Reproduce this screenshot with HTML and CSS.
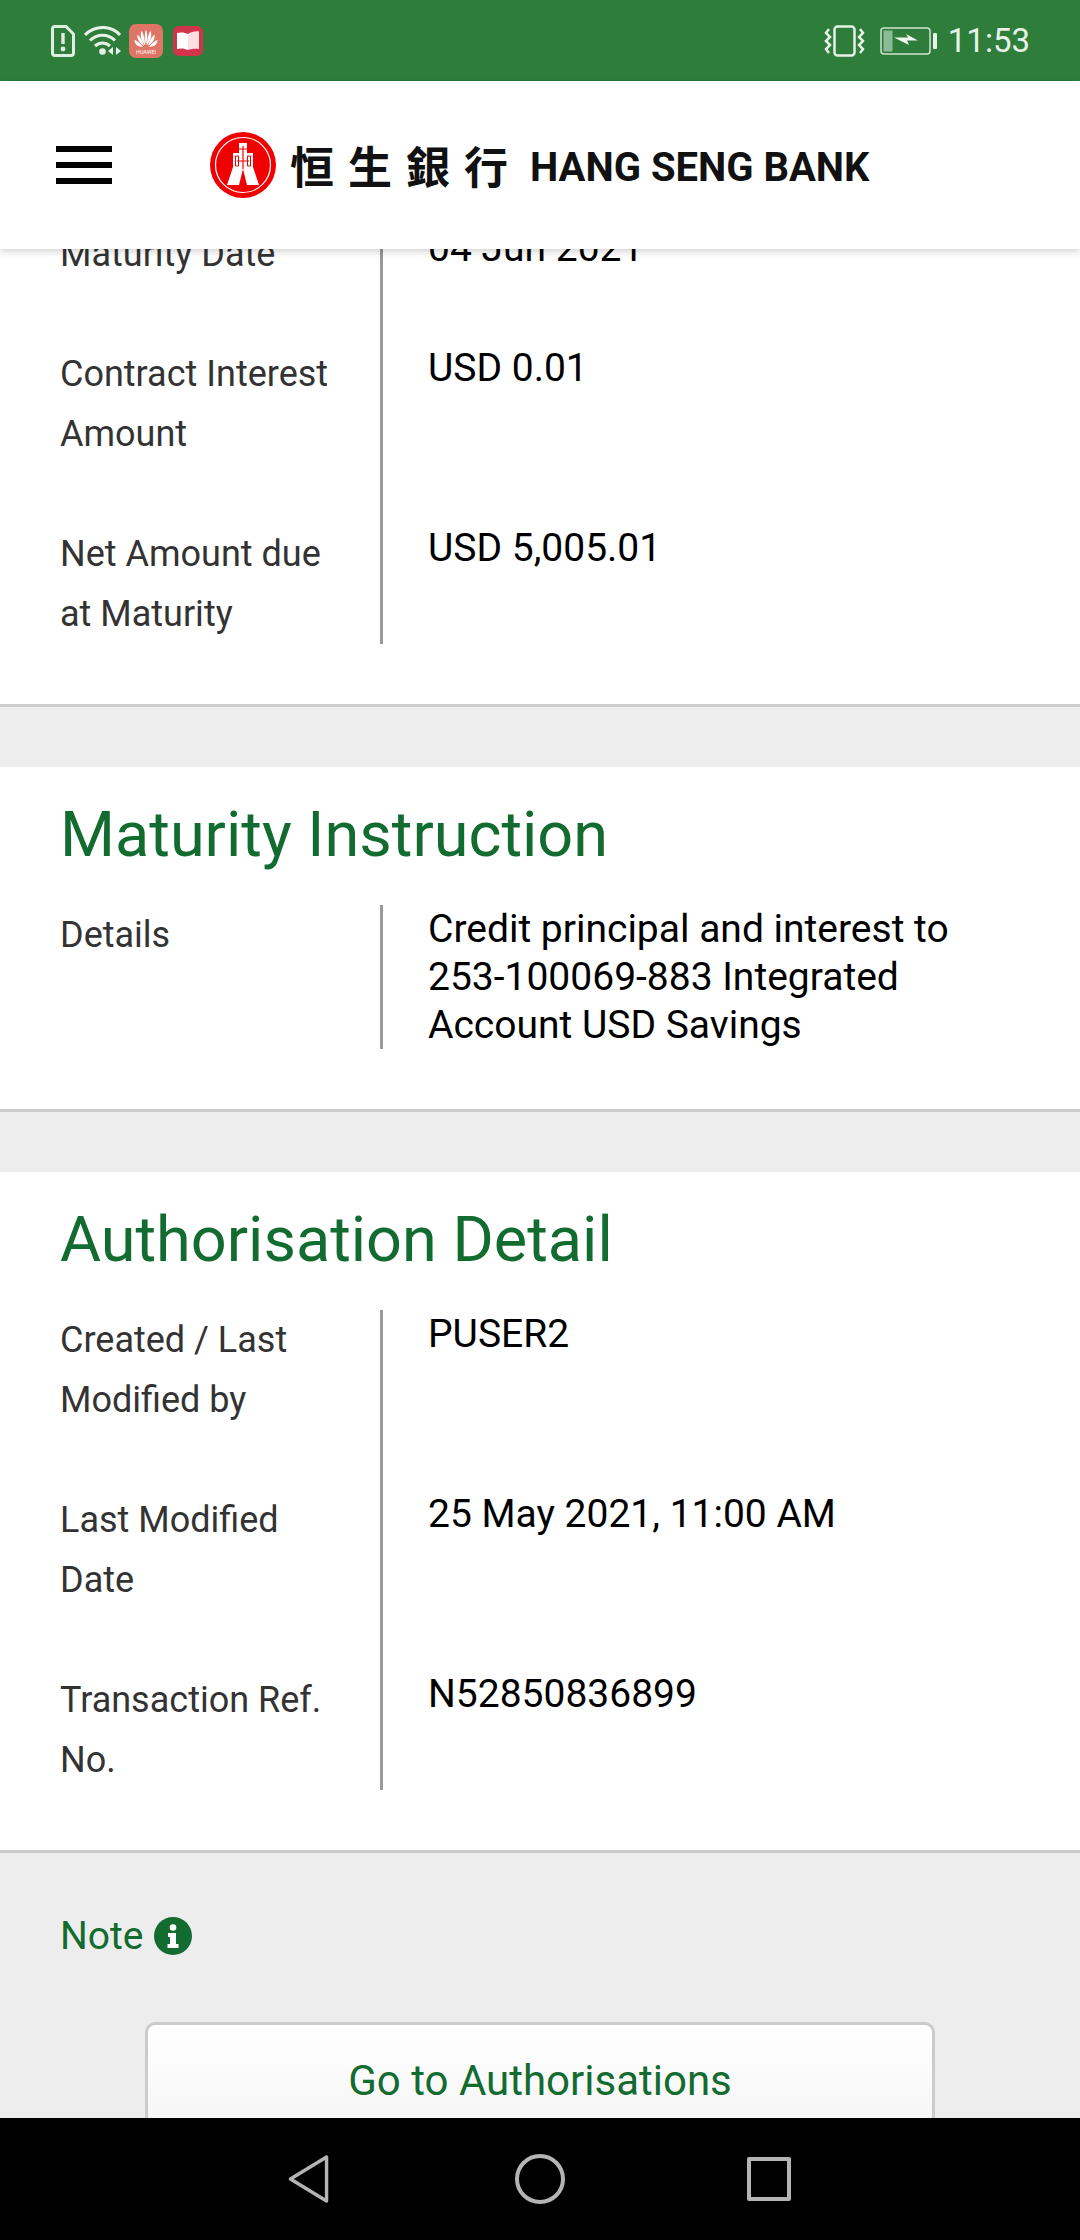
FILE: index.html
```html
<!DOCTYPE html>
<html lang="en">
<head>
    <meta charset="UTF-8">
    <meta name="viewport" content="width=device-width, initial-scale=1.0">
    <title>Hang Seng Bank</title>
    <link rel="stylesheet" href="styles.css">
</head>
<body>
    <div class="screen">
        <!-- Android status bar -->
        <div class="statusbar">
            <div class="status-left">
                <svg class="ic-sim" viewBox="0 0 24 32"><path d="M3.500 1.500H15L22.500 9V28a2.500 2.500 0 0 1-2.500 2.500H4A2.500 2.500 0 0 1 1.500 28V4a2.500 2.500 0 0 1 2-2.500z" fill="none" stroke="#dcefe0" stroke-width="3"/><path d="M12 8v11" stroke="#dcefe0" stroke-width="3.400"/><circle cx="12" cy="24" r="2.400" fill="#dcefe0"/></svg>
                <svg class="ic-wifi" viewBox="0 0 38 30"><g fill="none" stroke="#e6f2e8" stroke-width="3.100"><path d="M1 9C11-1 27-1 36 9"/><path d="M6 14.500c7-7 18-7 25 0"/><path d="M11 20c4.500-4 10.500-4 15 0"/></g><circle cx="18.500" cy="25.500" r="3.300" fill="#e6f2e8"/><path d="M29 21v8l-5-4zM32 21v8l5-4z" fill="#e6f2e8"/></svg>
                <svg class="ic-huawei" viewBox="0 0 34 34"><rect width="34" height="34" rx="7" fill="#de7565"/><g fill="#fff" transform="matrix(1 0 0 1.2 0 -1)"><path d="M17 5.500c1.500 3 1.500 8 0 13-1.500-5-1.500-10 0-13z"/><path d="M12.500 6.500c2.500 3 3.500 8 3.500 12-3-3-5.500-8-3.500-12z"/><path d="M21.500 6.500c-2.500 3-3.500 8-3.500 12 3-3 5.500-8 3.500-12z"/><path d="M8.500 9.500c3 2 5.500 6 6.500 9.500-3.500-2-7.500-5-6.500-9.500z"/><path d="M25.500 9.500c-3 2-5.500 6-6.500 9.500 3.500-2 7.500-5 6.500-9.500z"/><path d="M5.500 14c3 1 6.500 3.500 8.500 6-4 0-8.500-1.500-8.500-6z"/><path d="M28.500 14c-3 1-6.500 3.500-8.500 6 4 0 8.500-1.500 8.500-6z"/></g><text x="17" y="30" font-family="Roboto, sans-serif" font-size="5.400" fill="#fff" text-anchor="middle">HUAWEI</text></svg>
                <svg class="ic-book" viewBox="0 0 30 30"><rect width="30" height="30" rx="6" fill="#d2354a"/><path d="M4 7c4-1 8-.500 11 1v16c-3-1.500-7-2-11-1z" fill="#fff"/><path d="M15 8c3-2 7-3 11-2.500V23c-4-.500-8 0-11 1z" fill="#fbdfe3"/></svg>
            </div>
            <div class="status-right">
                <svg class="ic-vibrate" viewBox="0 0 41 32"><rect x="10.500" y="1.500" width="20" height="29" rx="3" fill="none" stroke="#e6f2e8" stroke-width="2.500"/><g fill="none" stroke="#e6f2e8" stroke-width="2.500"><path d="M5 4 2 8l4 4-4 4 4 4-4 4 3 4"/><path d="M36 4l3 4-4 4 4 4-4 4 4 4-3 4"/></g></svg>
                <svg class="ic-battery" viewBox="0 0 57 28"><rect x="1" y="1" width="49" height="26" rx="3" fill="none" stroke="#cfe3d3" stroke-width="1.500"/><rect x="3.500" y="3.500" width="9" height="21" fill="#8dbb97"/><path d="M14 10.500h14l-2-3.500 12 6.500H27l2 4.500z" fill="#f0f7f1"/><rect x="53" y="6" width="4" height="16" rx="1" fill="#e6f2e8"/></svg>
                <span class="clock">11:53</span>
            </div>
        </div>

        <!-- App header -->
        <header class="topbar">
            <div class="burger"><span></span><span></span><span></span></div>
            <div class="logo">
                <svg class="logo-mark" viewBox="0 0 66 66">
                    <circle cx="33" cy="33" r="33" fill="#f00000"/>
                    <circle cx="33" cy="33" r="27.500" fill="none" stroke="#fff" stroke-width="1.200"/>
                    <path d="M29 11h8v10h6v14l6 18H37l-4-16-4 16H17l6-18V21h6z" fill="#fff"/>
                    <path d="M33 14v23M29 17h8M27 29h12" stroke="#f00000" stroke-width="1.200" fill="none"/>
                    <path d="M25.500 24h3v10h-3zM37.500 24h3v10h-3z" stroke="#f00000" stroke-width="1" fill="none"/>
                </svg>
                <span class="logo-cjk">恒生銀行</span>
                <span class="logo-latin">HANG SENG BANK</span>
            </div>
        </header>

        <!-- Scrolled page content -->
        <main class="content">
            <section class="panel panel-first">
                <div class="row">
                    <div class="label">Maturity Date</div>
                    <div class="value">04 Jun 2021</div>
                </div>
                <div class="row">
                    <div class="label">Contract Interest Amount</div>
                    <div class="value">USD 0.01</div>
                </div>
                <div class="row">
                    <div class="label">Net Amount due at Maturity</div>
                    <div class="value">USD 5,005.01</div>
                </div>
            </section>

            <section class="panel">
                <h2>Maturity Instruction</h2>
                <div class="row">
                    <div class="label">Details</div>
                    <div class="value">Credit principal and interest to 253-100069-883 Integrated Account USD Savings</div>
                </div>
            </section>

            <section class="panel">
                <h2>Authorisation Detail</h2>
                <div class="row">
                    <div class="label">Created / Last Modified by</div>
                    <div class="value">PUSER2</div>
                </div>
                <div class="row">
                    <div class="label">Last Modified Date</div>
                    <div class="value">25 May 2021, 11:00 AM</div>
                </div>
                <div class="row">
                    <div class="label">Transaction Ref. No.</div>
                    <div class="value">N52850836899</div>
                </div>
            </section>

            <div class="note">
                <span>Note</span>
                <svg class="note-icon" viewBox="0 0 38 38"><circle cx="19" cy="19" r="19" fill="#126b2f"/><circle cx="19" cy="10.500" r="3.300" fill="#fff"/><path d="M14 16h8v11h2.500v4h-11v-4H16v-7h-2z" fill="#fff"/></svg>
            </div>
            <button class="btn">Go to Authorisations</button>
        </main>

        <!-- Android nav bar -->
        <nav class="navbar">
            <svg class="nav-back" viewBox="0 0 42 50"><path d="M39.500 2.500v45L2.500 25z" fill="none" stroke="#b4b4b4" stroke-width="3.500" stroke-linejoin="round"/></svg>
            <div class="nav-home"></div>
            <div class="nav-recent"></div>
        </nav>
    </div>
</body>
</html>
```

FILE: styles.css
```css
* {
    box-sizing: border-box;
}
body {
    margin: 0;
    font-family: Roboto, sans-serif;
    background-color: #ededed;
}
.screen {
    width: 1080px;
    height: 2240px;
    display: flex;
    flex-direction: column;
    overflow: hidden;
}

/* status bar */
.statusbar {
    height: 81px;
    flex-shrink: 0;
    background: #2e7d3a;
    display: flex;
    justify-content: space-between;
    align-items: center;
    padding: 0 50px 0 51px;
}
.status-left, .status-right {
    display: flex;
    align-items: center;
}
.ic-sim { width: 24px; height: 32px; margin-right: 9px; }
.ic-wifi { width: 38px; height: 30px; margin-right: 7px; }
.ic-huawei { width: 34px; height: 34px; margin-right: 10px; }
.ic-book { width: 30px; height: 30px; }
.ic-vibrate { width: 41px; height: 32px; margin-right: 15px; }
.ic-battery { width: 57px; height: 28px; margin-right: 11px; }
.clock {
    font-size: 33px;
    color: #e6f2e8;
}

/* header */
.topbar {
    height: 168px;
    flex-shrink: 0;
    background: white;
    display: flex;
    align-items: center;
    padding-left: 56px;
    box-shadow: 0 2px 8px rgba(0, 0, 0, 0.2);
    position: relative;
    z-index: 2;
}
.burger {
    width: 56px;
    display: flex;
    flex-direction: column;
    gap: 10px;
    margin-right: 98px;
}
.burger span {
    height: 6px;
    background: black;
}
.logo {
    display: flex;
    align-items: center;
}
.logo-mark {
    width: 66px;
    height: 66px;
    margin-right: 14px;
}
.logo-cjk {
    font-family: "Noto Sans CJK TC", sans-serif;
    font-size: 44px;
    line-height: 60px;
    font-weight: 700;
    letter-spacing: 14px;
    color: #111;
    margin-right: 8px;
}
.logo-latin {
    font-size: 40px;
    font-weight: 700;
    color: #111;
    white-space: nowrap;
    padding-top: 4px;
}

/* content */
.content {
    flex: 1;
    min-height: 0;
    overflow: hidden;
}
.panel {
    background: white;
    border-bottom: 3px solid #ccc;
    padding-bottom: 60px;
    margin-bottom: 60px;
}
.panel-first {
    margin-top: -25px;
}
h2 {
    margin: 0;
    height: 138px;
    padding: 33px 0 0 60px;
    font-size: 63px;
    line-height: 70px;
    font-weight: 400;
    color: #126b2f;
}
.row {
    display: flex;
}
.label {
    width: 380px;
    flex-shrink: 0;
    padding: 0 40px 60px 60px;
    font-size: 36px;
    line-height: 60px;
    color: #333;
}
.value {
    flex: 1;
    border-left: 3px solid #999;
    padding: 0 70px 0 45px;
    font-size: 39px;
    line-height: 48px;
    color: black;
}
.row:last-child .label {
    padding-bottom: 0;
}

/* bottom of page */
.note {
    display: flex;
    align-items: center;
    gap: 10px;
    height: 46px;
    margin: 0 60px 63px;
    color: #126b2f;
    font-size: 39px;
}
.note-icon {
    width: 38px;
    height: 38px;
}
.btn {
    display: block;
    width: 790px;
    height: 120px;
    margin: 0 auto;
    padding: 0 0 4px;
    background: linear-gradient(#fff, #f4f4f4);
    border: 3px solid #ccc;
    border-radius: 10px;
    color: #126b2f;
    font-family: Roboto, sans-serif;
    font-size: 42px;
}

/* nav bar */
.navbar {
    height: 122px;
    flex-shrink: 0;
    background: black;
    position: relative;
    z-index: 2;
    display: flex;
    align-items: center;
    justify-content: center;
    padding-right: 1px;
}
.nav-back {
    width: 41px;
    height: 50px;
    margin-right: 186px;
}
.nav-home {
    width: 50px;
    height: 50px;
    border: 4px solid #b4b4b4;
    border-radius: 50%;
    margin-right: 182px;
}
.nav-recent {
    width: 44px;
    height: 44px;
    border: 4px solid #b4b4b4;
    border-radius: 2px;
}
```
